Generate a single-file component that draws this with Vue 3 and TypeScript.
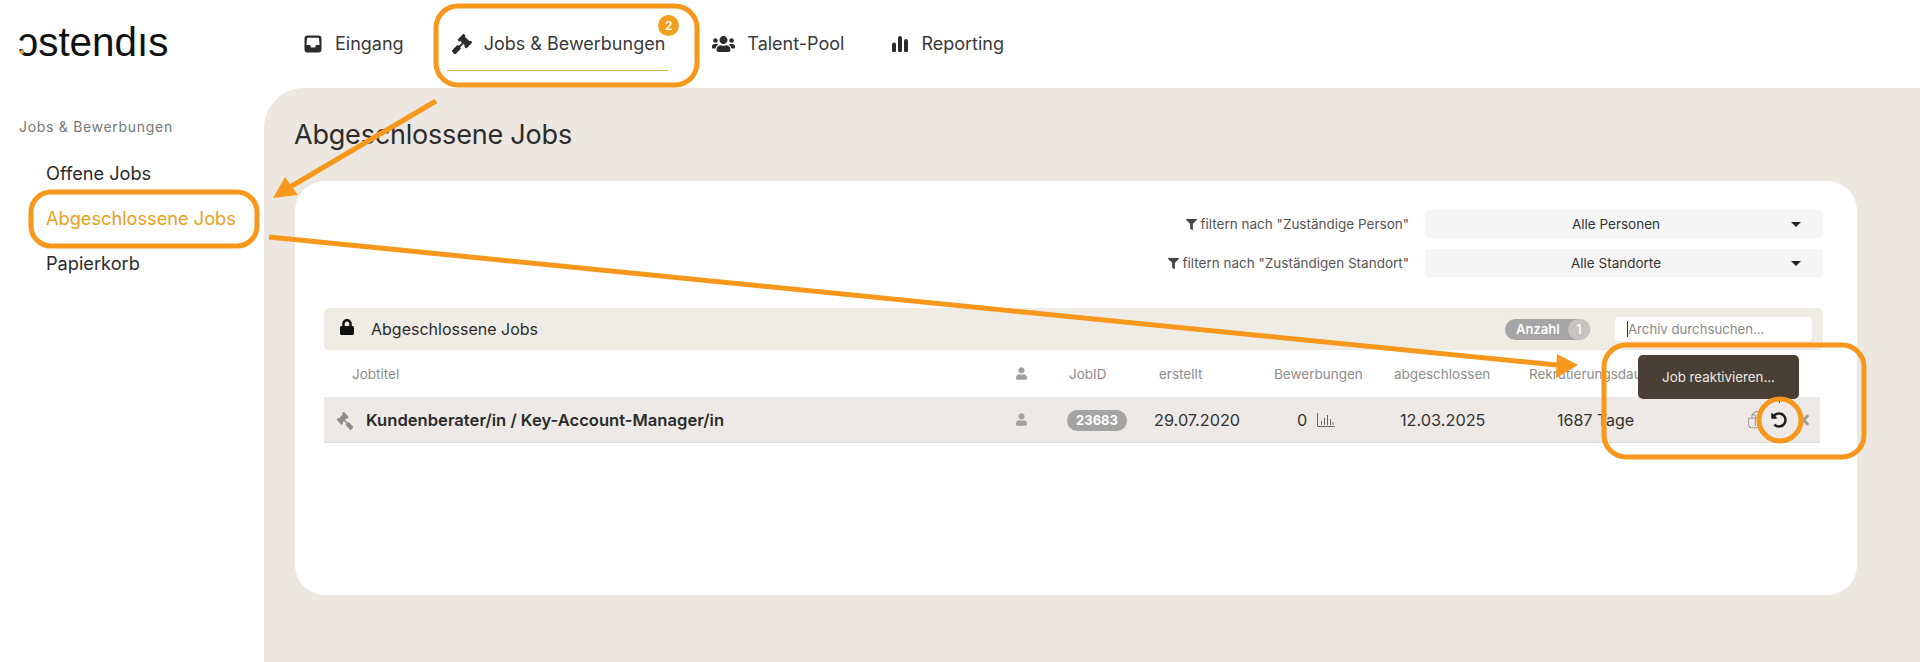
<script setup lang="ts">
interface NavItem {
  label: string
  view: string
  d: string
  cls: string
  active?: boolean
  badge?: number
}

const gavel = 'M504.971 199.362l-22.627-22.627c-9.373-9.373-24.569-9.373-33.941 0l-5.657 5.657L329.608 69.255l5.657-5.657c9.373-9.373 9.373-24.569 0-33.941L312.638 7.029c-9.373-9.373-24.569-9.373-33.941 0L154.246 131.48c-9.373 9.373-9.373 24.569 0 33.941l22.627 22.627c9.373 9.373 24.569 9.373 33.941 0l5.657-5.657 39.598 39.598-81.04 81.04-5.657-5.657c-12.497-12.497-32.758-12.497-45.255 0L9.373 412.118c-12.497 12.497-12.497 32.758 0 45.255l45.255 45.255c12.497 12.497 32.758 12.497 45.255 0l114.745-114.745c12.497-12.497 12.497-32.758 0-45.255l-5.657-5.657 81.04-81.04 39.598 39.598-5.657 5.657c-9.373 9.373-9.373 24.569 0 33.941l22.627 22.627c9.373 9.373 24.569 9.373 33.941 0l124.451-124.451c9.372-9.372 9.372-24.568 0-33.941z'
const user = 'M224 256c70.7 0 128-57.3 128-128S294.7 0 224 0 96 57.3 96 128s57.3 128 128 128zm89.6 32h-16.7c-22.2 10.2-46.9 16-72.9 16s-50.6-5.8-72.9-16h-16.7C60.2 288 0 348.2 0 422.4V464c0 26.5 21.5 48 48 48h352c26.5 0 48-21.5 48-48v-41.6c0-74.2-60.2-134.4-134.4-134.4z'
const filter = 'M487.976 0H24.028C2.71 0-8.047 25.866 7.058 40.971L192 225.941V432c0 7.831 3.821 15.17 10.237 19.662l80 55.98C298.02 518.69 320 507.493 320 487.98V225.941l184.947-184.97C520.021 25.896 509.338 0 487.976 0z'
const lock = 'M400 224h-24v-72C376 68.2 307.8 0 224 0S72 68.2 72 152v72H48c-26.5 0-48 21.5-48 48v192c0 26.5 21.5 48 48 48h352c26.5 0 48-21.5 48-48V272c0-26.5-21.5-48-48-48zm-104 0H152v-72c0-39.7 32.3-72 72-72s72 32.3 72 72v72z'
const undo = 'M255.545 8c-66.269.119-126.438 26.233-170.86 68.685L48.971 40.971C33.851 25.851 8 36.559 8 57.941V192c0 13.255 10.745 24 24 24h134.059c21.382 0 32.09-25.851 16.971-40.971l-41.75-41.75c30.864-28.899 70.801-44.907 113.23-45.273 92.398-.798 170.283 73.977 169.484 169.442C423.236 348.009 349.816 424 256 424c-41.127 0-79.997-14.678-110.63-41.556-4.743-4.161-11.906-3.908-16.368.553L89.34 422.659c-4.872 4.872-4.631 12.815.482 17.433C133.798 479.813 192.074 504 256 504c136.966 0 247.999-111.033 248-247.998C504.001 119.193 392.354 7.755 255.545 8z'
const times = 'M242.72 256l100.07-100.07c12.28-12.28 12.28-32.19 0-44.48l-22.24-22.24c-12.28-12.28-32.19-12.28-44.48 0L176 189.28 75.93 89.21c-12.28-12.28-32.19-12.28-44.48 0L9.21 111.45c-12.28 12.28-12.28 32.19 0 44.48L109.28 256 9.21 356.07c-12.28 12.28-12.28 32.19 0 44.48l22.24 22.24c12.28 12.28 32.2 12.28 44.48 0L176 322.72l100.07 100.07c12.28 12.28 32.2 12.28 44.48 0l22.24-22.24c12.28-12.28 12.28-32.19 0-44.48L242.72 256z'

const nav: NavItem[] = [
  {
    label: 'Eingang',
    view: '0 0 20 20',
    cls: 'w-inbox',
    d: 'M4.5 1.5h11a3 3 0 0 1 3 3v11a3 3 0 0 1-3 3h-11a3 3 0 0 1-3-3v-11a3 3 0 0 1 3-3zM5 3.8a1 1 0 0 0-1 .9l-.6 6.3H7l1 2.5h4l1-2.5h3.6L16 4.7a1 1 0 0 0-1-.9z',
  },
  { label: 'Jobs & Bewerbungen', view: '0 0 512 512', cls: 'w-gavel', d: gavel, active: true, badge: 2 },
  {
    label: 'Talent-Pool',
    view: '0 0 640 512',
    cls: 'w-users',
    d: 'M96 224c35.3 0 64-28.7 64-64s-28.7-64-64-64-64 28.7-64 64 28.7 64 64 64zm448 0c35.3 0 64-28.7 64-64s-28.7-64-64-64-64 28.7-64 64 28.7 64 64 64zm32 32h-64c-17.6 0-33.5 7.1-45.1 18.6 40.3 22.1 68.9 62 75.1 109.4h66c17.7 0 32-14.3 32-32v-32c0-35.3-28.7-64-64-64zm-256 0c61.9 0 112-50.1 112-112S381.9 32 320 32 208 82.1 208 144s50.1 112 112 112zm76.8 32h-8.3c-20.8 10-43.9 16-68.5 16s-47.6-6-68.5-16h-8.3C179.6 288 128 339.6 128 403.2V432c0 26.5 21.5 48 48 48h288c26.5 0 48-21.5 48-48v-28.8c0-63.6-51.6-115.2-115.2-115.2zm-223.7-13.4C161.5 263.1 145.6 256 128 256H64c-35.3 0-64 28.7-64 64v32c0 17.7 14.3 32 32 32h65.9c6.3-47.4 34.9-87.3 75.2-109.4z',
  },
  {
    label: 'Reporting',
    view: '0 0 18 18',
    cls: 'w-bars',
    d: 'M1 9.5a2 2 0 0 1 4 0V16a1 1 0 0 1-1 1H2a1 1 0 0 1-1-1zM7 3a2 2 0 0 1 4 0v13a1 1 0 0 1-1 1H8a1 1 0 0 1-1-1zM13 6a2 2 0 0 1 4 0v10a1 1 0 0 1-1 1h-2a1 1 0 0 1-1-1z',
  },
]

const sideLinks = ['Offene Jobs', 'Abgeschlossene Jobs', 'Papierkorb']

const filters = [
  { label: 'filtern nach "Zuständige Person"', value: 'Alle Personen' },
  { label: 'filtern nach "Zuständigen Standort"', value: 'Alle Standorte' },
]
</script>

<template>
  <div class="page">
    <header class="top">
      <div class="logo">ɔstendıs<i class="logo-dot"></i></div>
      <nav class="main-nav">
        <a v-for="item in nav" :key="item.label" :class="['nav-item', { active: item.active }]">
          <svg :class="['nav-icon', item.cls]" :viewBox="item.view"><path :d="item.d" /></svg>
          <span>{{ item.label }}</span>
          <b v-if="item.badge" class="nav-badge">{{ item.badge }}</b>
        </a>
      </nav>
    </header>

    <div class="body">
      <aside class="side">
        <h4>Jobs &amp; Bewerbungen</h4>
        <a
          v-for="(link, i) in sideLinks"
          :key="link"
          :class="['side-link', { current: i === 1 }]"
        >{{ link }}</a>
      </aside>

      <main class="panel">
        <h1>Abgeschlossene Jobs</h1>
        <section class="card">
          <div class="filters">
            <div v-for="f in filters" :key="f.value" class="filter-row">
              <label>
                <svg class="filter-icon" viewBox="0 0 512 512"><path :d="filter" /></svg>
                {{ f.label }}
              </label>
              <div class="select">
                <span>{{ f.value }}</span>
                <i class="caret"></i>
              </div>
            </div>
          </div>

          <div class="band">
            <svg class="lock" viewBox="0 0 448 512"><path :d="lock" /></svg>
            <span class="band-title">Abgeschlossene Jobs</span>
            <div class="count"><span>Anzahl</span><b>1</b></div>
            <div class="search"><i class="cursor"></i>Archiv durchsuchen...</div>
          </div>

          <div class="table">
            <div class="grid head">
              <span class="c-title">Jobtitel</span>
              <span class="c-person"><svg viewBox="0 0 448 512"><path :d="user" /></svg></span>
              <span class="c-id">JobID</span>
              <span class="c-date">erstellt</span>
              <span class="c-apps">Bewerbungen</span>
              <span class="c-closed">abgeschlossen</span>
              <span class="c-days">Rekrutierungsdauer</span>
              <span></span>
            </div>
            <div class="grid row">
              <span class="c-title strong">
                <svg class="row-gavel" viewBox="0 0 512 512"><path :d="gavel" /></svg>
                Kundenberater/in / Key-Account-Manager/in
              </span>
              <span class="c-person"><svg viewBox="0 0 448 512"><path :d="user" /></svg></span>
              <span class="c-id"><b class="id-pill">23683</b></span>
              <span class="c-date">29.07.2020</span>
              <span class="c-apps">
                0
                <svg class="mini-chart" viewBox="0 0 18 14">
                  <path d="M.5 0v13.5H18M4.5 12V8M7.5 12V5M10.5 12V2M13.5 12V6M16 12V9" />
                </svg>
              </span>
              <span class="c-closed">12.03.2025</span>
              <span class="c-days">1687 Tage</span>
              <span class="actions">
                <svg class="copy" viewBox="0 0 20 22">
                  <path d="M7 5 11 1h4v6M7 5v4h4V5zM3 9h8l4-2v13H5l-2-3zM11 9v9" />
                </svg>
                <svg class="undo" viewBox="0 0 512 512"><path :d="undo" /></svg>
                <svg class="times" viewBox="0 0 352 512"><path :d="times" /></svg>
              </span>
            </div>
            <div class="tooltip">Job reaktivieren...</div>
          </div>
        </section>
      </main>
    </div>

    <svg class="notes" viewBox="0 0 1920 662" fill="none">
      <g stroke="#f7981d" stroke-width="5">
        <rect x="436" y="6" width="261" height="79" rx="22" />
        <rect x="31" y="192" width="226" height="54" rx="20" />
        <rect x="1604" y="345" width="260" height="112" rx="22" />
        <circle cx="1780" cy="420" r="21" />
        <path d="M436 101 285 190M269 237 1557 365" />
      </g>
      <path d="M273 198 285 177 298 195zM1578 365 1557 354 1556 378z" fill="#f7981d" />
    </svg>
  </div>
</template>

<style>
html, body {
  margin: 0;
  background: #fff;
}
</style>

<style scoped>
.page {
  position: relative;
  width: 1920px;
  height: 662px;
  overflow: hidden;
  font-family: Inter, 'Noto Sans', sans-serif;
  color: #2b2b2b;
}

.top {
  height: 88px;
  display: flex;
  align-items: center;
}

.logo {
  position: relative;
  width: 303px;
  padding-left: 18px;
  box-sizing: border-box;
  font-family: 'Liberation Sans', 'DejaVu Sans', sans-serif;
  font-size: 40.4px;
  line-height: 1;
  margin-top: -4px;
  color: #111;
}

.logo-dot {
  position: absolute;
  left: 20px;
  top: 28px;
  width: 4px;
  height: 4px;
  border-radius: 50%;
  background: #e8a73a;
}

.main-nav {
  display: flex;
  align-items: center;
  margin-top: -1px;
  font-size: 18px;
}

.nav-item {
  position: relative;
  display: flex;
  align-items: center;
  gap: 12px;
  height: 40px;
  margin-right: 47px;
  color: #3a3a3a;
}

.nav-item:nth-child(2) { margin-left: 1px; }

.nav-item.active::after {
  content: '';
  position: absolute;
  left: -5px;
  right: -3px;
  bottom: -7px;
  height: 1px;
  background: #e3b04c;
}

.nav-icon { height: 20px; fill: #2b2b2b; fill-rule: evenodd; flex: none; }
.w-inbox { width: 20px; }
.w-gavel { width: 20px; height: 20px; }
.w-users { width: 23px; }
.w-bars { width: 18px; }

.nav-badge {
  position: absolute;
  right: -14px;
  top: -9px;
  width: 21px;
  height: 21px;
  border-radius: 50%;
  background: #f0a01e;
  color: #fff;
  font-size: 12px;
  font-weight: 600;
  display: flex;
  align-items: center;
  justify-content: center;
}

.body {
  display: flex;
  height: 574px;
}

.side {
  width: 264px;
  flex: none;
  display: flex;
  flex-direction: column;
  align-items: flex-start;
}

.side h4 {
  margin: 30px 0 15px 19px;
  font-size: 14px;
  font-weight: 400;
  letter-spacing: 0.7px;
  color: #777;
  line-height: 18px;
}

.side-link {
  margin-left: 46px;
  height: 45px;
  line-height: 45px;
  font-size: 18.2px;
  color: #2b2b2b;
}

.side-link.current { color: #e8a020; }

.panel {
  flex: 1;
  background: #ece8e1;
  border-top-left-radius: 40px;
  padding: 31px 63px 0 31px;
}

.panel h1 {
  margin: 0 0 30px -1px;
  font-size: 27px;
  line-height: 32px;
  font-weight: 400;
  letter-spacing: -0.2px;
  color: #2c2c2c;
}

.card {
  height: 414px;
  background: #fff;
  border-radius: 30px;
  padding: 29px 34px 0 29px;
  box-sizing: border-box;
}

.filters {
  display: flex;
  flex-direction: column;
  gap: 11px;
  margin-bottom: 31px;
}

.filter-row {
  display: flex;
  justify-content: flex-end;
  align-items: center;
  gap: 16px;
  font-size: 13.5px;
  color: #555;
}

.filter-icon {
  width: 11px;
  height: 11px;
  fill: #444;
  vertical-align: -1px;
}

.select {
  position: relative;
  width: 398px;
  height: 28px;
  border-radius: 4px;
  background: #f5f5f5;
  color: #333;
  display: flex;
  align-items: center;
  justify-content: center;
  padding-right: 16px;
  box-sizing: border-box;
}

.caret {
  position: absolute;
  right: 22px;
  top: 12px;
  border: 5px solid transparent;
  border-top-color: #222;
  border-bottom: 0;
}

.band {
  height: 42px;
  background: #efebe5;
  border-radius: 5px;
  display: flex;
  align-items: center;
  padding: 0 11px 0 16px;
  font-size: 16px;
}

.lock { width: 14px; height: 16px; fill: #111; margin-right: 17px; margin-top: -4px; }
.band-title { flex: 1; color: #2b2b2b; }

.count {
  display: flex;
  align-items: center;
  height: 21px;
  width: 85px;
  border-radius: 11px;
  background: #a5a5a5;
  color: #fff;
  font-size: 13px;
  font-weight: 600;
  margin-right: 25px;
  overflow: hidden;
}

.count span { flex: 1; padding-left: 11px; }

.count b {
  width: 22px;
  height: 21px;
  border-radius: 11px;
  background: #c6c4c2;
  font-weight: 500;
  text-align: center;
  line-height: 21px;
}

.search {
  position: relative;
  width: 197px;
  height: 24px;
  line-height: 24px;
  padding-left: 13px;
  box-sizing: border-box;
  background: #fff;
  border-radius: 4px;
  font-size: 13.2px;
  color: #8a8a8a;
}

.cursor {
  position: absolute;
  left: 12px;
  top: 4px;
  width: 1px;
  height: 16px;
  background: #333;
}

.table { position: relative; padding-right: 3px; }

.grid {
  display: grid;
  grid-template-columns: 686px 50px 90px 115px 120px 135px 215px 85px;
  align-items: center;
}

.head {
  height: 47px;
  font-size: 13.5px;
  color: #8d8d8d;
}

.head svg, .row .c-person svg {
  width: 11px;
  height: 13px;
  fill: #a3a09c;
  display: block;
}

.row {
  height: 46px;
  background: #ece9e6;
  border-bottom: 1px solid #dedbd7;
  box-sizing: border-box;
  font-size: 16.3px;
  color: #333;
}

.c-title { padding-left: 28px; position: relative; }
.c-person { padding-left: 6px; }
.c-id { padding-left: 9px; }
.c-date { padding-left: 9px; }
.c-apps { padding-left: 9px; }
.c-closed { padding-left: 9px; }
.c-days { padding-left: 9px; }

.row .c-title { padding-left: 42px; font-size: 16.6px; }
.row .c-id { padding-left: 7px; }
.row .c-date { padding-left: 4px; }
.row .c-apps { padding-left: 32px; display: flex; align-items: center; gap: 10px; }
.row .c-closed { padding-left: 15px; }
.row .c-days { padding-left: 37px; font-size: 16px; }

.strong { font-weight: 600; color: #2b2b2b; }

.row-gavel {
  position: absolute;
  left: 12px;
  top: 2px;
  width: 18px;
  height: 18px;
  fill: #8f8c88;
  transform: scaleX(-0.9);
}

.id-pill {
  display: inline-block;
  width: 60px;
  height: 21px;
  line-height: 21px;
  text-align: center;
  border-radius: 11px;
  background: #a3a3a3;
  color: #fff;
  font-size: 13px;
  font-weight: 700;
}

.mini-chart {
  width: 18px;
  height: 14px;
  fill: none;
  stroke: #666;
  stroke-width: 1;
}

.actions {
  display: flex;
  align-items: center;
  padding-left: 11px;
}

.copy { width: 17px; height: 20px; fill: none; stroke: #9f9c98; stroke-width: 1.2; }
.undo { width: 16px; height: 16px; fill: #1d1d1d; margin-left: 8px; }
.times { width: 11px; height: 16px; fill: #a09d99; margin-left: 11px; }

.tooltip {
  position: absolute;
  left: 1314px;
  top: 5px;
  width: 161px;
  height: 44px;
  line-height: 44px;
  text-align: center;
  border-radius: 5px;
  background: #4a3f35;
  color: #efe9e2;
  font-size: 13.3px;
}

.tooltip::after {
  content: '';
  position: absolute;
  left: 141px;
  bottom: -4px;
  width: 1px;
  height: 4px;
  background: #4a3f35;
}

.notes {
  position: absolute;
  left: 0;
  top: 0;
  width: 1920px;
  height: 662px;
  pointer-events: none;
}
</style>
